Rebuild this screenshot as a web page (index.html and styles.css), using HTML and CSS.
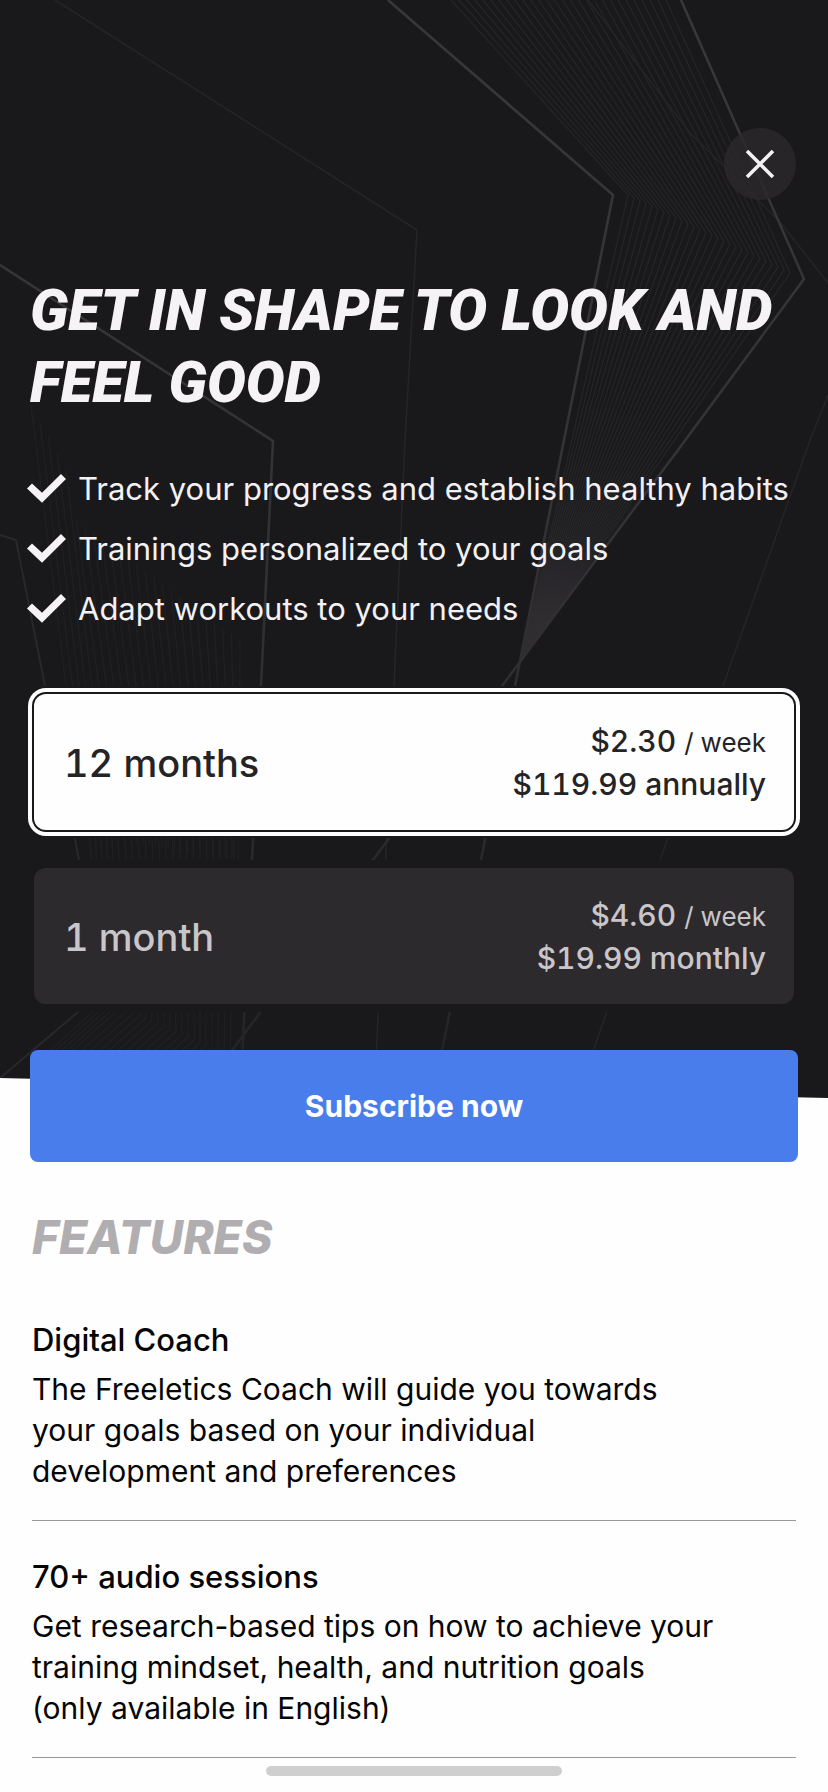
FILE: index.html
```html
<!DOCTYPE html>
<html lang="en">
<head>
  <meta charset="utf-8">
  <meta name="viewport" content="width=device-width, initial-scale=1">
  <title>Get in shape to look and feel good</title>
  <link rel="stylesheet" href="styles.css">
</head>
<body>
  <main class="page">
    <section class="hero">
      <svg class="hero-art" viewBox="0 0 828 1098" preserveAspectRatio="xMidYMin slice" aria-hidden="true">
        <g id="hatch-right" class="hatch"></g>
        <g id="hatch-left" class="hatch hatch-faint"></g>
        <g class="thin">
          <path d="M55 0 417 230 405 440 394 686 376 1060"/>
          <path d="M588 0 690 133 780 222 828 283"/>
          <path d="M828 395 810 440 723 686 660 860 590 1060"/>
        </g>
        <path class="cone" d="M562 450 521 662 678 450Z"/>
        <g class="edge">
          <path d="M388 0 613 195 562 450 515 686 481 860 440 1060"/>
          <path d="M681 0 804 279 678 450 502 686 373 860 225 1060"/>
          <path d="M0 265 273 441 261 686 252 860 242 1060"/>
        </g>
        <path class="edge edge-dim" d="M0 535 16 540 45 686 79 860 95 990 78 1012 0 1078"/>
        <defs>
          <linearGradient id="cone-fill" x1="0" y1="0" x2="0" y2="1">
            <stop offset="0" stop-color="#2f2c30" stop-opacity="0"/>
            <stop offset="0.5" stop-color="#2f2c30" stop-opacity="0.25"/>
            <stop offset="0.8" stop-color="#302d31"/>
          </linearGradient>
          <linearGradient id="art-fade" gradientUnits="userSpaceOnUse" x1="0" y1="0" x2="0" y2="1098">
            <stop offset="0" stop-color="#3a373b"/>
            <stop offset="0.5" stop-color="#343135"/>
            <stop offset="1" stop-color="#232225"/>
          </linearGradient>
        </defs>
      </svg>

      <div class="toolbar">
        <button class="close" type="button" aria-label="Close">
          <svg viewBox="0 0 28 28" aria-hidden="true"><path d="M1 1 27 27M27 1 1 27"/></svg>
        </button>
      </div>

      <h1 class="title">Get in shape to look and feel good</h1>

      <ul class="benefits">
        <li><svg class="check" viewBox="0 0 39 29" aria-hidden="true"><path d="M0 14.5 5 9.5 15 18.8 34 0 39 5 15 28.7Z"/></svg>Track your progress and establish healthy habits</li>
        <li><svg class="check" viewBox="0 0 39 29" aria-hidden="true"><path d="M0 14.5 5 9.5 15 18.8 34 0 39 5 15 28.7Z"/></svg>Trainings personalized to your goals</li>
        <li><svg class="check" viewBox="0 0 39 29" aria-hidden="true"><path d="M0 14.5 5 9.5 15 18.8 34 0 39 5 15 28.7Z"/></svg>Adapt workouts to your needs</li>
      </ul>

      <div class="plans" role="radiogroup" aria-label="Subscription length">
        <label class="plan">
          <input class="plan-input" type="radio" name="plan" value="12" checked>
          <span class="plan-name">12 months</span>
          <span class="plan-price">
            <span class="price-line">$2.30 <span class="per">/ week</span></span>
            <span class="price-line">$119.99 annually</span>
          </span>
        </label>
        <label class="plan">
          <input class="plan-input" type="radio" name="plan" value="1">
          <span class="plan-name">1 month</span>
          <span class="plan-price">
            <span class="price-line">$4.60 <span class="per">/ week</span></span>
            <span class="price-line">$19.99 monthly</span>
          </span>
        </label>
      </div>
    </section>

    <div class="action">
      <button class="subscribe" type="button">Subscribe now</button>
    </div>

    <section class="features">
      <h2 class="features-title">Features</h2>
      <article class="feature">
        <h3 class="feature-name">Digital Coach</h3>
        <p class="feature-text">The Freeletics Coach will guide you towards<br>your goals based on your individual<br>development and preferences</p>
      </article>
      <article class="feature">
        <h3 class="feature-name">70+ audio sessions</h3>
        <p class="feature-text">Get research-based tips on how to achieve your<br>training mindset, health, and nutrition goals<br>(only available in English)</p>
      </article>
    </section>
  </main>
  <div class="home-bar"></div>
  <script src="hatch.js"></script>
</body>
</html>
```

FILE: styles.css
```css
* {
  box-sizing: border-box;
}

body {
  margin: 0;
  background: #fefefe;
  color: #050506;
  font-family: Inter, "Liberation Sans", sans-serif;
  font-size: 30px;
  line-height: 41px;
}

h1, h2, h3, p, ul {
  margin: 0;
  padding: 0;
}

.hero {
  position: relative;
  padding: 128px 34px 94px;
  background: #19191b;
  clip-path: polygon(0 0, 100% 0, 100% 100%, 0 calc(100% - 20px));
}

.hero-art {
  position: absolute;
  inset: 0;
  width: 100%;
  height: 100%;
  fill: none;
}

.hero > :not(.hero-art) {
  position: relative;
}

.edge {
  stroke: url(#art-fade);
  stroke-width: 2.5;
}

.edge-dim {
  stroke: #29272a;
  stroke-width: 2;
}

.thin {
  stroke: #252426;
  stroke-width: 1.5;
}

.hatch {
  stroke: #252427;
  stroke-width: 1.3;
}

.hatch-faint {
  stroke: #202022;
}

.cone {
  fill: url(#cone-fill);
}

.toolbar {
  display: flex;
  justify-content: flex-end;
  margin-right: -2px;
}

.close {
  display: grid;
  place-items: center;
  width: 72px;
  height: 72px;
  padding: 0;
  border: 0;
  border-radius: 50%;
  background: rgba(43, 40, 43, 0.85);
}

.close svg {
  width: 28px;
  height: 28px;
  fill: none;
  stroke: #f3f1f4;
  stroke-width: 3.6;
}

.title {
  margin: 74px -4px 40px;
  color: #f6f3f7;
  font-family: Roboto, sans-serif;
  font-size: 58px;
  font-style: italic;
  font-weight: 900;
  line-height: 72px;
  text-transform: uppercase;
}

.benefits {
  margin: 0 -7px 56px;
  list-style: none;
  color: #f3f1f4;
  font-size: 31px;
}

.benefits li {
  display: flex;
  align-items: center;
  gap: 12px;
  min-height: 60px;
}

.check {
  flex: none;
  width: 39px;
  height: 29px;
  fill: #f6f3f7;
}

.plans {
  display: grid;
  gap: 38px;
}

.plan {
  display: flex;
  align-items: center;
  justify-content: space-between;
  min-height: 136px;
  padding: 26px 28px 24px 30px;
  border-radius: 12px;
  background: #2d2a2e;
  color: #c9c6ca;
  box-shadow: 0 0 0 8px #19191b;
  font-variant-numeric: tabular-nums;
}

.plan:has(:checked) {
  background: #fefefe;
  color: #242325;
  box-shadow: 0 0 0 2px #19191b, 0 0 0 6px #fefefe, 0 0 0 8px #19191b;
}

.plan-input {
  position: absolute;
  appearance: none;
  margin: 0;
}

.plan-name {
  font-size: 38px;
  font-weight: 500;
}

.plan-price {
  display: grid;
  line-height: 43px;
  font-weight: 500;
  text-align: right;
}

.per {
  font-size: 26px;
  font-weight: 400;
  line-height: 26px;
}

.action {
  position: relative;
  display: grid;
  margin-top: -48px;
  padding: 0 30px;
}

.subscribe {
  min-height: 112px;
  border: 0;
  border-radius: 8px;
  background: #4a7dec;
  color: #fefefe;
  font: 700 30px/41px Inter, "Liberation Sans", sans-serif;
}

.features {
  padding: 51px 32px 0;
}

.features-title {
  margin-bottom: 23px;
  color: #b1aeb2;
  font-size: 46px;
  font-style: italic;
  font-weight: 800;
  line-height: 48px;
  text-transform: uppercase;
}

.feature {
  padding: 35px 0 28px;
  border-bottom: 1px solid #99979a;
}

.feature-name {
  margin-bottom: 9px;
  font-size: 31px;
  font-weight: 500;
}

.home-bar {
  position: fixed;
  bottom: 16px;
  left: 50%;
  width: 296px;
  height: 10px;
  border-radius: 5px;
  background: #cfcfcf;
  transform: translateX(-50%);
}
```

FILE: hatch.js
```javascript
// Draws a bundle of bent lines, each interpolated between a first and a last polyline.
function drawHatch(id, count, first, last) {
  const lines = [];
  for (let i = 0; i < count; i++) {
    const t = i / (count - 1);
    const points = first.map(([x, y], k) =>
      (x + (last[k][0] - x) * t).toFixed(1) + " " + (y + (last[k][1] - y) * t).toFixed(1));
    lines.push('<path d="M' + points.join(" ") + '"/>');
  }
  document.getElementById(id).innerHTML += lines.join("");
}

drawHatch("hatch-right", 28, [[451, 0], [628, 195], [521, 662]], [[666, 0], [790, 273], [521, 662]]);
drawHatch("hatch-left", 5, [[31, 405], [66, 686], [90, 840]], [[66, 470], [92, 686], [112, 840]]);
drawHatch("hatch-left", 20, [[76, 520], [99, 686], [118, 840]], [[240, 640], [240, 686], [238, 860]]);
drawHatch("hatch-left", 5, [[90, 840], [100, 1005], [40, 1060]], [[112, 840], [120, 1008], [62, 1060]]);
drawHatch("hatch-left", 18, [[118, 840], [128, 1010], [75, 1056]], [[234, 840], [230, 1056], [220, 1066]]);
```
